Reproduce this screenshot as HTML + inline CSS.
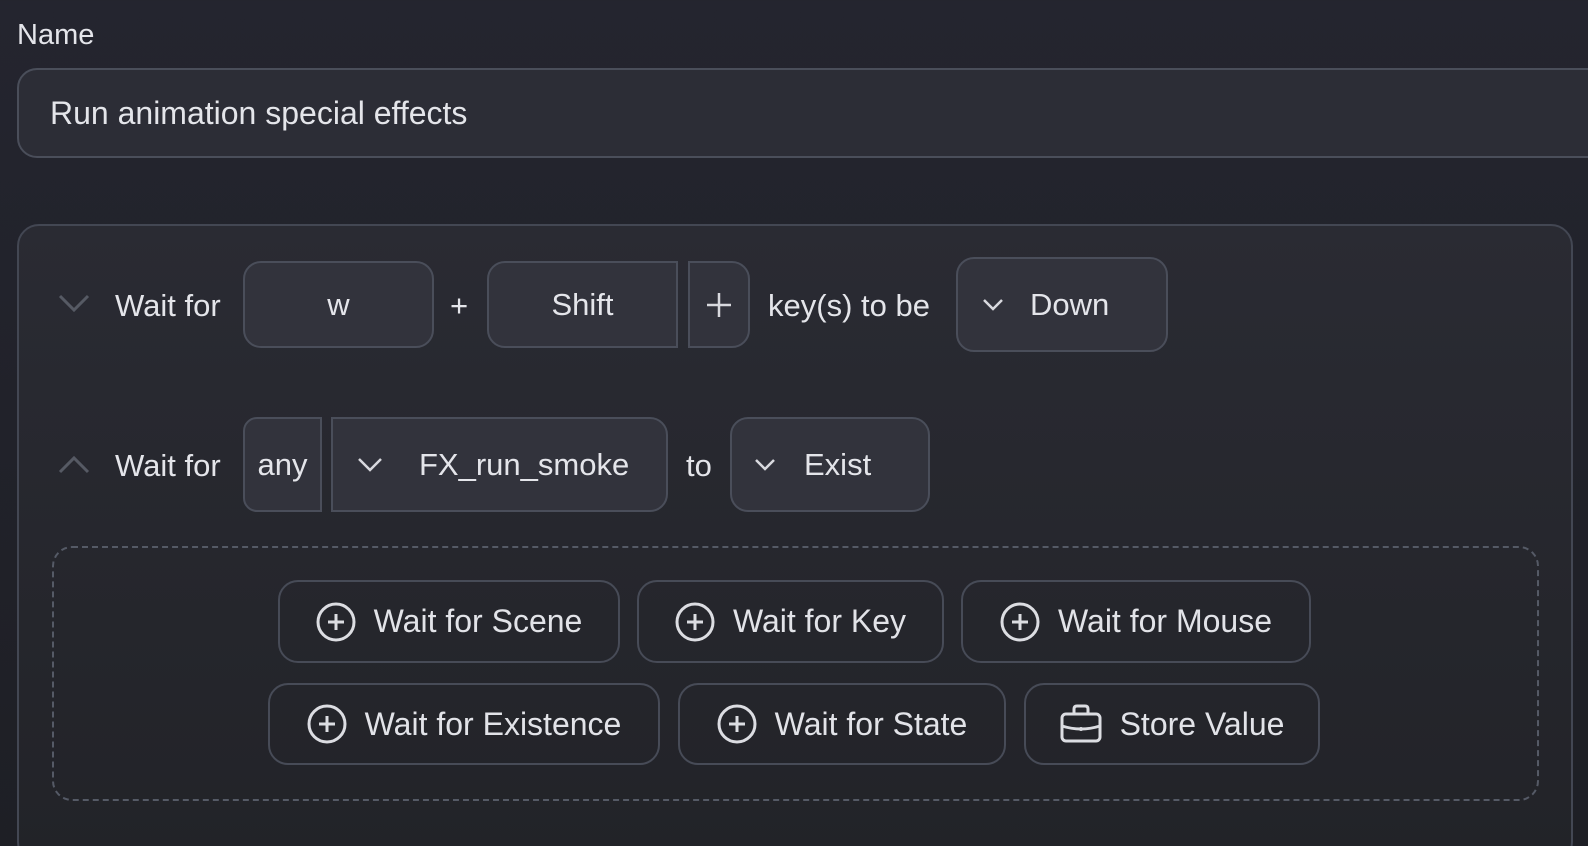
<!DOCTYPE html>
<html style="height:846px;overflow:hidden"><head><meta charset="utf-8"><style>
*{box-sizing:border-box;margin:0;padding:0}
body{width:1588px;height:846px;overflow:hidden;background:linear-gradient(180deg,#24252f 0%,#1e1f25 100%);font-family:"Liberation Sans",sans-serif;color:#e4e5ea;position:relative}
.a{position:absolute}
.t{position:absolute;font-size:31px;line-height:1;white-space:nowrap}
.box{position:absolute;border:2px solid #4a4e5a;background:#32333c;border-radius:18px;display:flex;align-items:center;justify-content:center;font-size:31px}
.btn{position:absolute;border:2px solid #474b57;border-radius:20px;display:flex;align-items:center;justify-content:center;font-size:32px;gap:18px;color:#e2e3e8}
svg{display:block}
</style></head><body>
<div class="t" style="left:17px;top:21px;font-size:29px">Name</div>
<div class="a" style="left:17px;top:68px;width:1600px;height:90px;border:2px solid #4a4e5a;border-radius:20px;background:#2c2d36"></div>
<div class="t" style="left:50px;top:97px;font-size:32px">Run animation special effects</div>

<div class="a" style="left:17px;top:224px;width:1556px;height:640px;border:2px solid #434753;border-radius:22px;background:linear-gradient(180deg,#2a2b33 0%,#222328 100%)"></div>

<svg class="a" style="left:58px;top:294px" width="32" height="18"><path d="M2 2 L16 16 L30 2" stroke="#565a64" stroke-width="3" fill="none"/></svg>
<div class="t" style="left:115px;top:290px">Wait for</div>
<div class="box" style="left:243px;top:261px;width:191px;height:87px">w</div>
<div class="t" style="left:450px;top:290px">+</div>
<div class="box" style="left:487px;top:261px;width:191px;height:87px;border-radius:18px 0 0 18px">Shift</div>
<div class="box" style="left:688px;top:261px;width:62px;height:87px;border-radius:0 18px 18px 0"><svg width="26" height="26"><path d="M13 1V25M1 13H25" stroke="#d8d9de" stroke-width="2.5"/></svg></div>
<div class="t" style="left:768px;top:290px">key(s) to be</div>
<div class="box" style="left:956px;top:257px;width:212px;height:95px;justify-content:flex-start;padding-left:24px;gap:26px"><svg width="22" height="14"><path d="M2 2L11 11L20 2" stroke="#d8d9de" stroke-width="2.5" fill="none"/></svg>Down</div>

<svg class="a" style="left:58px;top:456px" width="32" height="18"><path d="M2 16 L16 2 L30 16" stroke="#565a64" stroke-width="3" fill="none"/></svg>
<div class="t" style="left:115px;top:450px">Wait for</div>
<div class="box" style="left:243px;top:417px;width:79px;height:95px;border-radius:14px 0 0 14px">any</div>
<div class="box" style="left:331px;top:417px;width:337px;height:95px;border-radius:0 18px 18px 0;justify-content:flex-start;padding-left:24px;gap:36px"><svg width="26" height="16"><path d="M2 2L13 13L24 2" stroke="#d8d9de" stroke-width="2.5" fill="none"/></svg>FX_run_smoke</div>
<div class="t" style="left:686px;top:450px">to</div>
<div class="box" style="left:730px;top:417px;width:200px;height:95px;justify-content:flex-start;padding-left:22px;gap:28px"><svg width="22" height="14"><path d="M2 2L11 11L20 2" stroke="#d8d9de" stroke-width="2.5" fill="none"/></svg>Exist</div>

<div class="a" style="left:52px;top:546px;width:1487px;height:255px;border:2px dashed #555a66;border-radius:20px"></div>

<div class="btn" style="left:278px;top:580px;width:342px;height:83px"><svg width="40" height="40"><circle cx="20" cy="20" r="18" stroke="#dcdde2" stroke-width="3" fill="none"/><path d="M20 12V28M12 20H28" stroke="#dcdde2" stroke-width="3"/></svg>Wait for Scene</div>
<div class="btn" style="left:637px;top:580px;width:307px;height:83px"><svg width="40" height="40"><circle cx="20" cy="20" r="18" stroke="#dcdde2" stroke-width="3" fill="none"/><path d="M20 12V28M12 20H28" stroke="#dcdde2" stroke-width="3"/></svg>Wait for Key</div>
<div class="btn" style="left:961px;top:580px;width:350px;height:83px"><svg width="40" height="40"><circle cx="20" cy="20" r="18" stroke="#dcdde2" stroke-width="3" fill="none"/><path d="M20 12V28M12 20H28" stroke="#dcdde2" stroke-width="3"/></svg>Wait for Mouse</div>
<div class="btn" style="left:268px;top:683px;width:392px;height:82px"><svg width="40" height="40"><circle cx="20" cy="20" r="18" stroke="#dcdde2" stroke-width="3" fill="none"/><path d="M20 12V28M12 20H28" stroke="#dcdde2" stroke-width="3"/></svg>Wait for Existence</div>
<div class="btn" style="left:678px;top:683px;width:328px;height:82px"><svg width="40" height="40"><circle cx="20" cy="20" r="18" stroke="#dcdde2" stroke-width="3" fill="none"/><path d="M20 12V28M12 20H28" stroke="#dcdde2" stroke-width="3"/></svg>Wait for State</div>
<div class="btn" style="left:1024px;top:683px;width:296px;height:82px"><svg width="42" height="40"><rect x="2" y="10" width="38" height="27" rx="4" stroke="#dcdde2" stroke-width="3" fill="none"/><path d="M14 10V5Q14 2 17 2H25Q28 2 28 5V10M2 22Q21 28 40 22" stroke="#dcdde2" stroke-width="3" fill="none"/><circle cx="21" cy="25" r="2" fill="#dcdde2"/></svg>Store Value</div>
</body></html>
